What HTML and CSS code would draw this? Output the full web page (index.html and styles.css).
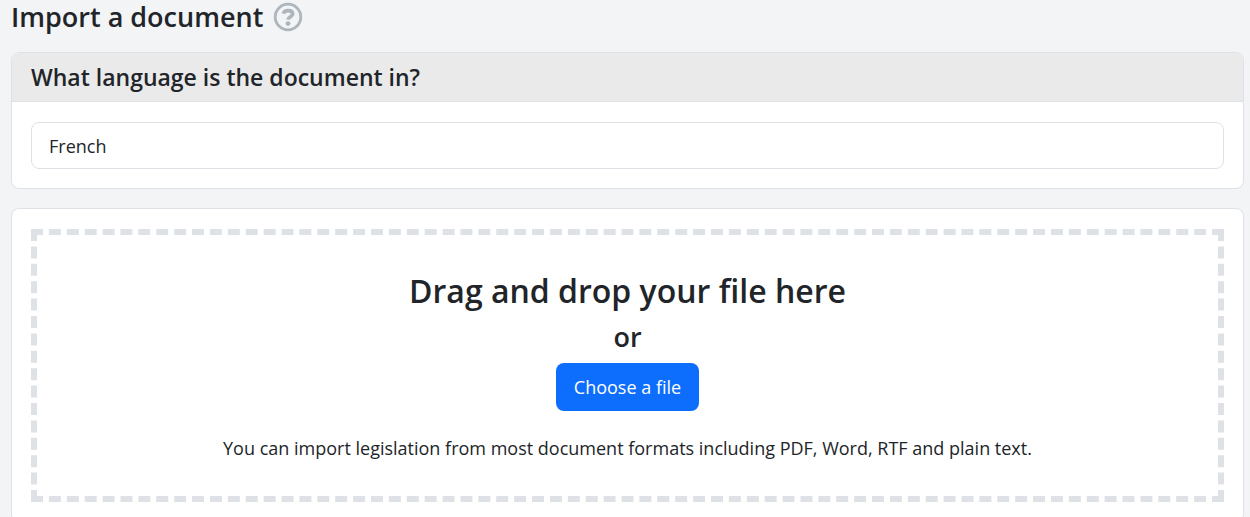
FILE: index.html
```html
<!DOCTYPE html>
<html lang="en">
<head>
  <meta charset="utf-8">
  <meta name="viewport" content="width=device-width, initial-scale=1">
  <title>Import a document</title>
  <link rel="stylesheet" href="styles.css">
</head>
<body>
  <main class="page">
    <header class="page-header">
      <h1 class="page-title">Import a document</h1>
      <a class="help-link" href="#" aria-label="Help">
        <svg class="help-icon" viewBox="0 0 28 28" aria-hidden="true">
          <circle cx="14" cy="14" r="12.8" fill="none" stroke="currentColor" stroke-width="2.8"/>
          <path d="M9.4 10.6C10 8.4 11.6 7.6 14 7.6C16.9 7.6 18.7 9 18.7 11.1C18.7 14 14.2 13.8 14 16.6" fill="none" stroke="currentColor" stroke-width="3.6"/>
          <circle cx="14" cy="20.6" r="2.4" fill="currentColor"/>
        </svg>
      </a>
    </header>

    <section class="card">
      <h2 class="card-header"><label for="language">What language is the document in?</label></h2>
      <div class="card-body">
        <input class="text-input" id="language" type="text" value="French">
      </div>
    </section>

    <section class="card">
      <div class="card-body">
        <div class="drop-zone">
          <h2 class="drop-title">Drag and drop your file here</h2>
          <p class="drop-or">or</p>
          <button class="button" type="button">Choose a file</button>
          <p class="drop-note">You can import legislation from most document formats including PDF, Word, RTF and plain text.</p>
        </div>
      </div>
    </section>
  </main>
</body>
</html>
```
FILE: styles.css
```css
*,
*::before,
*::after {
  box-sizing: border-box;
}

body {
  margin: 0;
  background: #f3f4f6;
  color: #212529;
  font-family: "Segoe UI", "Open Sans", "Noto Sans", sans-serif;
  font-size: 18px;
  line-height: 28px;
}

h1,
h2,
p {
  margin: 0;
}

.page {
  display: flex;
  flex-direction: column;
  gap: 19px;
  padding: 0 6px 0 11px;
}

.page-header {
  display: flex;
  align-items: center;
  gap: 11px;
}

.page-title {
  font-size: 27px;
  font-weight: 600;
  line-height: 33px;
}

.help-link {
  display: flex;
  color: #adb5bd;
}

.help-icon {
  width: 28px;
  height: 28px;
  overflow: visible;
}

.card {
  overflow: hidden;
  border: 1px solid #dee2e6;
  border-radius: 8px;
  background: #fff;
}

.card-header {
  padding: 10px 19px;
  border-bottom: 1px solid #dee2e6;
  background: #eaeaea;
  font-size: 23px;
  font-weight: 600;
  line-height: 28px;
}

.card-body {
  padding: 20px 19px 19px;
}

.text-input {
  display: block;
  width: 100%;
  height: 47px;
  padding: 0 17px;
  border: 1px solid #dee2e6;
  border-radius: 8px;
  background: #fff;
  color: inherit;
  font: inherit;
}

.drop-zone {
  display: flex;
  flex-direction: column;
  align-items: center;
  padding: 36px 20px 34px;
  border: 6px dashed #dee2e6;
  text-align: center;
}

.drop-title {
  font-size: 32px;
  font-weight: 600;
  line-height: 40px;
}

.drop-or {
  padding: 10px 0;
  font-size: 27px;
  font-weight: 600;
  line-height: 32px;
}

.button {
  padding: 10px 18px;
  border: 0;
  border-radius: 8px;
  background: #0d6efd;
  color: #fff;
  font: inherit;
}

.drop-note {
  margin-top: 23px;
}
```
